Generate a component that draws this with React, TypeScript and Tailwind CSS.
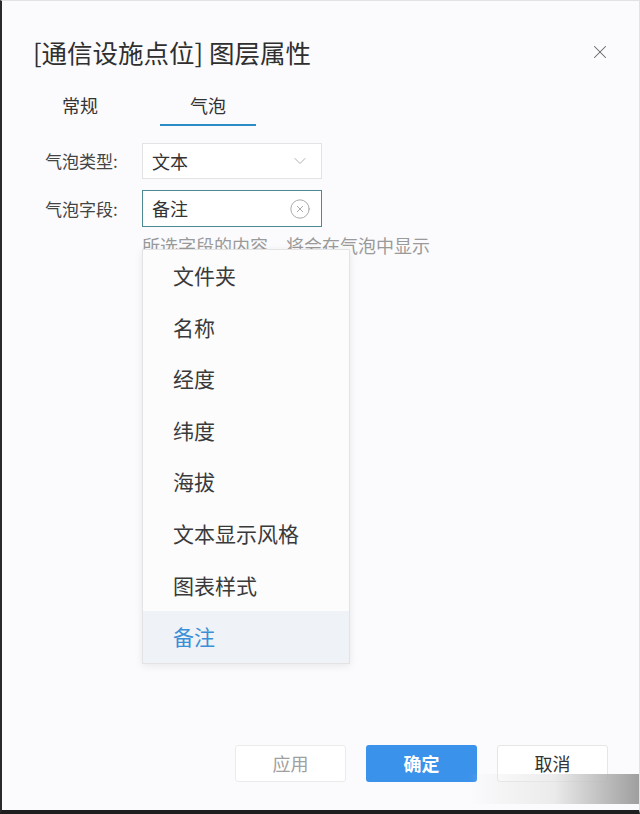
import { X, ChevronDown, CircleX } from "lucide-react";

const options = ["文件夹", "名称", "经度", "纬度", "海拔", "文本显示风格", "图表样式", "备注"];

const App = () => {
  return (
    <div className="relative flex h-[814px] w-[640px] flex-col overflow-hidden border-t border-r border-l-2 border-b-4 border-t-[#e2e2e2] border-r-[#e2e2e2] border-l-[#2a2a2a] border-b-[#1e1e1e] bg-[#fbfbfd] font-['Noto_Sans_CJK_SC',sans-serif] text-[#333]">
      {/* header */}
      <div className="flex items-center justify-between pl-[31px] pr-[28px] pt-[33px]">
        <h1 className="text-[25.5px] leading-[36px] text-[#2f2f2f]">[通信设施点位] 图层属性</h1>
        <X size={22} strokeWidth={1.1} color="#666" />
      </div>

      {/* tabs */}
      <div className="mt-[20px] flex gap-[32px] pl-[30px]">
        <div className="w-[96px] border-b-2 border-transparent pt-[2px] pb-[6px] text-center text-[18px] leading-[26px] text-[#333]">
          常规
        </div>
        <div className="w-[96px] border-b-2 border-[#2b8cc6] pt-[2px] pb-[6px] text-center text-[18px] leading-[26px] text-[#333]">
          气泡
        </div>
      </div>

      {/* form */}
      <div className="mt-[17px] flex flex-col pl-[43px]">
        <div className="flex items-center">
          <label className="w-[97px] text-[17px] text-[#444]">气泡类型:</label>
          <div className="flex h-[36px] w-[180px] items-center justify-between border border-[#e3e3e3] bg-white pl-[9px] pr-[11px]">
            <span className="text-[18px] text-[#333]">文本</span>
            <ChevronDown size={20} strokeWidth={1.1} color="#aaa" />
          </div>
        </div>
        <div className="mt-[11px] flex items-center">
          <label className="w-[97px] text-[17px] text-[#444]">气泡字段:</label>
          <div className="flex h-[37px] w-[180px] items-center justify-between border border-[#4c8a93] bg-white pl-[9px] pr-[10px]">
            <span className="text-[18px] text-[#333]">备注</span>
            <CircleX size={22} strokeWidth={0.9} color="#999" />
          </div>
        </div>
        <p className="ml-[97px] mt-[6px] text-[18px] leading-[24px] text-[#9a9a9a]">所选字段的内容，将会在气泡中显示</p>
      </div>

      <div className="flex-1" />

      {/* footer */}
      <div className="flex justify-end gap-[20px] pb-[28px] pr-[31px]">
        <button className="h-[37px] w-[111px] rounded-[3px] border border-[#ebebeb] bg-white text-[18px] text-[#a0a0a0]">
          应用
        </button>
        <button className="h-[37px] w-[111px] rounded-[3px] bg-[#3b92ea] text-[18px] font-bold text-white">
          确定
        </button>
        <button className="h-[37px] w-[111px] rounded-[3px] border border-[#e6e6e6] bg-white text-[18px] text-[#333]">
          取消
        </button>
      </div>

      {/* dropdown menu */}
      <div className="absolute left-[140px] top-[248px] w-[208px] border border-[#e3e3e3] bg-[#fcfcfd] shadow-[0_2px_8px_rgba(0,0,0,0.08)]">
        {options.map((o, i) => (
          <div
            key={o}
            className={
              i === options.length - 1
                ? "flex h-[51.6px] items-center bg-[#eff2f7] pl-[30px] text-[21px] text-[#3a8fd6]"
                : "flex h-[51.6px] items-center pl-[30px] text-[21px] text-[#3a3a3a]"
            }
          >
            {o}
          </div>
        ))}
      </div>

      {/* watermark smear */}
      <div className="pointer-events-none absolute bottom-[6px] right-0 h-[30px] w-[170px] bg-linear-to-r from-transparent via-[#e4e4e4]/70 to-[#9f9f9f]" />
    </div>
  );
};

export default App;
